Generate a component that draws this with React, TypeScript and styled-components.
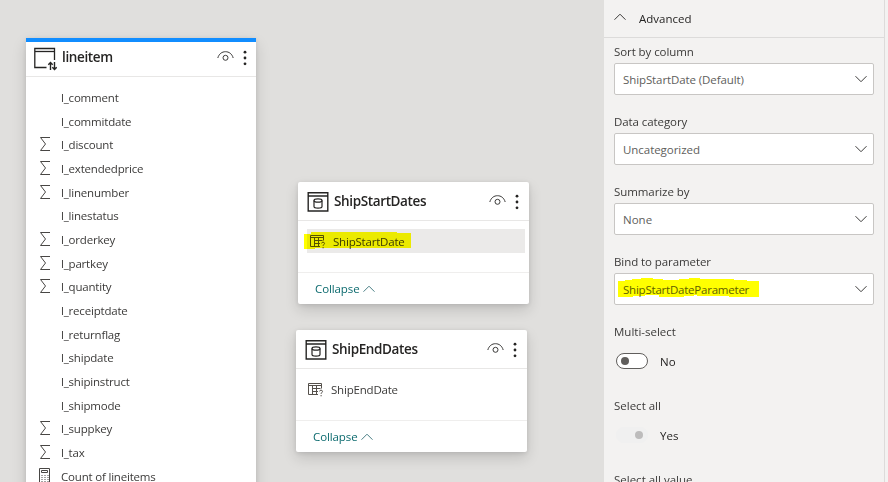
import React from "react";
import styled, { createGlobalStyle } from "styled-components";

const GlobalStyle = createGlobalStyle`
  * { box-sizing: border-box; }
  body {
    margin: 0;
    overflow: hidden;
    font-family: "Open Sans", "Noto Sans", sans-serif;
    font-size: 11.5px;
    color: #3b3a39;
  }
  svg { display: block; flex: none; }
`;

const Page = styled.div`
  display: grid;
  grid-template-columns: 604px 1fr;
  width: 888px;
  height: 482px;
  overflow: hidden;
`;

const Canvas = styled.main`
  position: relative;
  overflow: hidden;
  background: #e0dfdd;
`;

const Text = styled.span<{ $track?: number }>`
  white-space: nowrap;
  line-height: 16px;
  letter-spacing: ${(p) => p.$track ?? 0}px;
`;

const Card = styled.section<{ $x: number; $y: number; $h: number; $accent?: boolean }>`
  position: absolute;
  left: ${(p) => p.$x}px;
  top: ${(p) => p.$y}px;
  width: ${(p) => (p.$accent ? 230 : 230.5)}px;
  height: ${(p) => p.$h}px;
  display: flex;
  flex-direction: column;
  overflow: hidden;
  background: #fff;
  border-top: ${(p) => (p.$accent ? "4px solid #118dff" : "0")};
  border-radius: ${(p) => (p.$accent ? "0" : "2px")};
  box-shadow: 0 6px 14px rgba(0, 0, 0, 0.14), 0 1px 4px rgba(0, 0, 0, 0.1);
`;

const CardHeader = styled.header<{ $accent?: boolean }>`
  display: flex;
  flex: none;
  align-items: flex-start;
  height: ${(p) => (p.$accent ? 35 : 39)}px;
  padding: ${(p) => (p.$accent ? "5px 8px 0 8px" : "9px 8.5px 0 9px")};
  border-bottom: 1px solid #e8e7e6;
`;

const CardTitle = styled.h2`
  flex: 1;
  margin: 0 0 0 5px;
  font-size: 13.5px;
  line-height: 20px;
  font-weight: 600;
  color: #252423;
  letter-spacing: -0.37px;
`;

const HeaderActions = styled.div`
  display: flex;
  gap: 8px;
  padding-top: 3px;
`;

const FieldList = styled.div`
  display: flex;
  flex-direction: column;
  padding-top: 9px;
`;

const FieldRow = styled.div`
  display: flex;
  align-items: center;
  flex: none;
  height: 23.69px;
  padding-left: 13px;
`;

const FieldIcon = styled.span`
  display: flex;
  width: 22px;
  padding-bottom: 2px;
`;

const CardBody = styled.div`
  flex: none;
  height: 51px;
  padding: 8px 4px 0 9px;
`;

const ColumnRow = styled.div<{ $selected?: boolean }>`
  position: relative;
  display: flex;
  align-items: center;
  gap: 7px;
  height: 24px;
  padding: 1px 0 0 3px;
  background: ${(p) => (p.$selected ? "#ebeae9" : "transparent")};
`;

const CardFooter = styled.footer`
  display: flex;
  flex: 1;
  align-items: center;
  gap: 3px;
  padding: 1px 0 0 17px;
  border-top: 1px solid #efeeed;
  color: #0b6a6e;
`;

const ColumnText = styled(Text)`
  padding-top: 1px;
`;

const Marker = styled.svg<{ $x: number; $y: number }>`
  position: absolute;
  left: ${(p) => p.$x}px;
  top: ${(p) => p.$y}px;
  mix-blend-mode: multiply;
  pointer-events: none;
`;

const Panel = styled.aside`
  background: #f3f2f1;
  display: flex;
`;

const PanelContent = styled.div`
  flex: none;
  width: 281px;
  border-right: 1px solid #dddbda;
`;

const PanelHeader = styled.div`
  display: flex;
  align-items: center;
  gap: 13px;
  height: 38px;
  padding: 0 0 0 10px;
  border-bottom: 1px solid #dcdbda;
  color: #252423;
`;

const ChevronSlot = styled.span`
  display: flex;
  padding-bottom: 4px;
`;

const Settings = styled.div`
  display: flex;
  flex-direction: column;
  padding: 5px 10px 0 10px;
`;

const Setting = styled.div<{ $h: number }>`
  display: flex;
  flex: none;
  flex-direction: column;
  height: ${(p) => p.$h}px;
  padding-top: 1px;
`;

const SelectBox = styled.div`
  position: relative;
  display: flex;
  align-items: center;
  justify-content: space-between;
  height: 32px;
  margin-top: 3px;
  padding: 0 6px 0 8px;
  background: #fff;
  border: 1px solid #c8c6c4;
  border-radius: 2px;
  color: #605e5c;
`;

const SelectText = styled(Text)`
  padding-top: 1px;
`;

const ToggleRow = styled.div`
  display: flex;
  align-items: center;
  gap: 12px;
  margin-top: 13px;
  padding-left: 2px;
  height: 16px;
  color: #252423;
`;

const ToggleText = styled(Text)`
  padding-top: 1px;
`;

const Track = styled.span<{ $off?: boolean }>`
  display: flex;
  align-items: center;
  justify-content: ${(p) => (p.$off ? "flex-start" : "flex-end")};
  width: 32px;
  height: 16px;
  padding: 0 ${(p) => (p.$off ? 4 : 4)}px;
  border: 1px solid ${(p) => (p.$off ? "#605e5c" : "#f0f0f0")};
  border-radius: 8px;
  background: ${(p) => (p.$off ? "#fff" : "#f0f0f0")};
  &::after {
    content: "";
    width: 8px;
    height: 8px;
    border-radius: 50%;
    background: ${(p) => (p.$off ? "#605e5c" : "#bdbcbc")};
  }
`;

const Sigma = () => (
  <svg width="12" height="16" viewBox="0 0 12 16" fill="none" stroke="#484644">
    <path d="M11 1.5H1.5L6.5 8L1.5 14.5H11" />
  </svg>
);

const Calculator = () => (
  <svg width="12" height="16" viewBox="0 0 12 16" fill="none" stroke="#484644">
    <path d="M.5.5h10v15H.5zM2.5 2.5h6v2h-6z" />
    <path d="M2.5 7.5h7M2.5 9.5h7M2.5 11.5h7M2.5 13.5h7" strokeDasharray="1 2" />
  </svg>
);

const Eye = () => (
  <svg width="17" height="12" viewBox="0 0 17 12" fill="none" stroke="#3b3a39">
    <path d="M.8 8C2 3.8 5 1.7 8.5 1.7S15 3.8 16.2 8" />
    <circle cx="8.5" cy="7.8" r="2.5" />
  </svg>
);

const Dots = () => (
  <svg width="6" height="16" viewBox="0 0 6 16" fill="#252423">
    <circle cx="3" cy="2.2" r="1.4" />
    <circle cx="3" cy="8" r="1.4" />
    <circle cx="3" cy="13.8" r="1.4" />
  </svg>
);

const DirectTable = () => (
  <svg width="23" height="24" viewBox="0 0 23 24" fill="none" stroke="#252423">
    <path d="M12.5 20.5H.8V1.5H20.5V13" strokeWidth="1.3" />
    <path d="M1 4.5H20" strokeWidth="1.3" />
    <path d="M16.5 23v-7.5M14.3 17.7l2.2-2.2l2.2 2.2M20.5 15v7.5M18.3 20.3l2.2 2.2l2.2-2.2" strokeWidth="1.4" />
  </svg>
);

const DatabaseTable = () => (
  <svg width="22" height="22" viewBox="0 0 22 22" fill="none" stroke="#252423">
    <path d="M1.2 1.7H20.8V20H1.2zM1 5H21" strokeWidth="1.4" />
    <ellipse cx="11" cy="9.5" rx="4" ry="1.7" strokeWidth="1.2" />
    <path d="M7 9.5v6c0 2.2 8 2.2 8 0v-6" strokeWidth="1.2" />
  </svg>
);

const ColumnIcon = () => (
  <svg width="16" height="15" viewBox="0 0 16 15" fill="none" stroke="#55504b">
    <path d="M10 12.5H.5V1.5h13v5M.5 3.5h13M4.5 3.5v9M8.5 3.5v9M4.5 6.5h8M4.5 9.5h5.5" />
    <path d="M11.6 9.4c0-1.7 2.9-1.6 2.9 0 0 1.1-1.4 1.1-1.4 2.5M13.1 13v1.3" />
  </svg>
);

const Chevron = ({ up, color = "#3b3a39" }: { up?: boolean; color?: string }) => (
  <svg width="12" height="8" viewBox="0 0 12 8" fill="none" stroke={color}>
    <path d={up ? "M.5 6.7L6 1.2L11.5 6.7" : "M.5 1.2L6 6.7L11.5 1.2"} />
  </svg>
);

const fields: { name: string; kind?: "sum" | "measure" }[] = [
  { name: "l_comment" },
  { name: "l_commitdate" },
  { name: "l_discount", kind: "sum" },
  { name: "l_extendedprice", kind: "sum" },
  { name: "l_linenumber", kind: "sum" },
  { name: "l_linestatus" },
  { name: "l_orderkey", kind: "sum" },
  { name: "l_partkey", kind: "sum" },
  { name: "l_quantity", kind: "sum" },
  { name: "l_receiptdate" },
  { name: "l_returnflag" },
  { name: "l_shipdate" },
  { name: "l_shipinstruct" },
  { name: "l_shipmode" },
  { name: "l_suppkey", kind: "sum" },
  { name: "l_tax", kind: "sum" },
  { name: "Count of lineitems", kind: "measure" },
];

const selects = [
  { label: "Sort by column", value: "ShipStartDate (Default)", track: -0.1 },
  { label: "Data category", value: "Uncategorized", track: -0.05 },
  { label: "Summarize by", value: "None", track: 0 },
  { label: "Bind to parameter", value: "ShipStartDateParameter", track: -0.22, marked: true },
];

function DateCard({ x, y, title, column, selected }: {
  x: number; y: number; title: string; column: string; selected?: boolean;
}) {
  return (
    <Card $x={x} $y={y} $h={122}>
      <CardHeader>
        <DatabaseTable />
        <CardTitle>{title}</CardTitle>
        <HeaderActions><Eye /><Dots /></HeaderActions>
      </CardHeader>
      <CardBody>
        <ColumnRow $selected={selected}>
          <ColumnIcon />
          <ColumnText $track={-0.2}>{column}</ColumnText>
          {selected && (
            <Marker $x={-3} $y={2} width="108" height="19" viewBox="0 0 108 19">
              <path d="M0 3H7V1H93V2H107V17H11V18H0z" fill="#ff0" />
            </Marker>
          )}
        </ColumnRow>
      </CardBody>
      <CardFooter>
        <Text $track={-0.1}>Collapse</Text>
        <Chevron up color="#4a7f85" />
      </CardFooter>
    </Card>
  );
}

export default function App() {
  return (
    <>
      <GlobalStyle />
      <Page>
        <Canvas>
          <Card $x={26} $y={38} $h={470} $accent>
            <CardHeader $accent>
              <DirectTable />
              <CardTitle>lineitem</CardTitle>
              <HeaderActions><Eye /><Dots /></HeaderActions>
            </CardHeader>
            <FieldList>
              {fields.map((f) => (
                <FieldRow key={f.name}>
                  <FieldIcon>
                    {f.kind === "sum" && <Sigma />}
                    {f.kind === "measure" && <Calculator />}
                  </FieldIcon>
                  <Text $track={-0.19}>{f.name}</Text>
                </FieldRow>
              ))}
            </FieldList>
          </Card>
          <DateCard x={298} y={182} title="ShipStartDates" column="ShipStartDate" selected />
          <DateCard x={296} y={330} title="ShipEndDates" column="ShipEndDate" />
        </Canvas>
        <Panel>
          <PanelContent>
            <PanelHeader>
              <ChevronSlot><Chevron up /></ChevronSlot>
              <Text>Advanced</Text>
            </PanelHeader>
            <Settings>
              {selects.map((s) => (
                <Setting key={s.label} $h={70}>
                  <Text $track={-0.08}>{s.label}</Text>
                  <SelectBox>
                    <SelectText $track={s.track}>{s.value}</SelectText>
                    <Chevron />
                    {s.marked && (
                      <Marker $x={3} $y={4} width="142" height="20" viewBox="0 0 142 20">
                        <path d="M0 3H7V2H14V1H23V0H35V1H45V2H61V1H71V0H82V1H116V2H129V3H141V19H111V18H79V17H76V18H66V19H41V17H27V18H15V19H0z" fill="#ff0" />
                      </Marker>
                    )}
                  </SelectBox>
                </Setting>
              ))}
              <Setting $h={74}>
                <Text>Multi-select</Text>
                <ToggleRow><Track $off /><ToggleText>No</ToggleText></ToggleRow>
              </Setting>
              <Setting $h={74}>
                <Text>Select all</Text>
                <ToggleRow><Track /><ToggleText>Yes</ToggleText></ToggleRow>
              </Setting>
              <Setting $h={74}>
                <Text>Select all value</Text>
              </Setting>
            </Settings>
          </PanelContent>
        </Panel>
      </Page>
    </>
  );
}
